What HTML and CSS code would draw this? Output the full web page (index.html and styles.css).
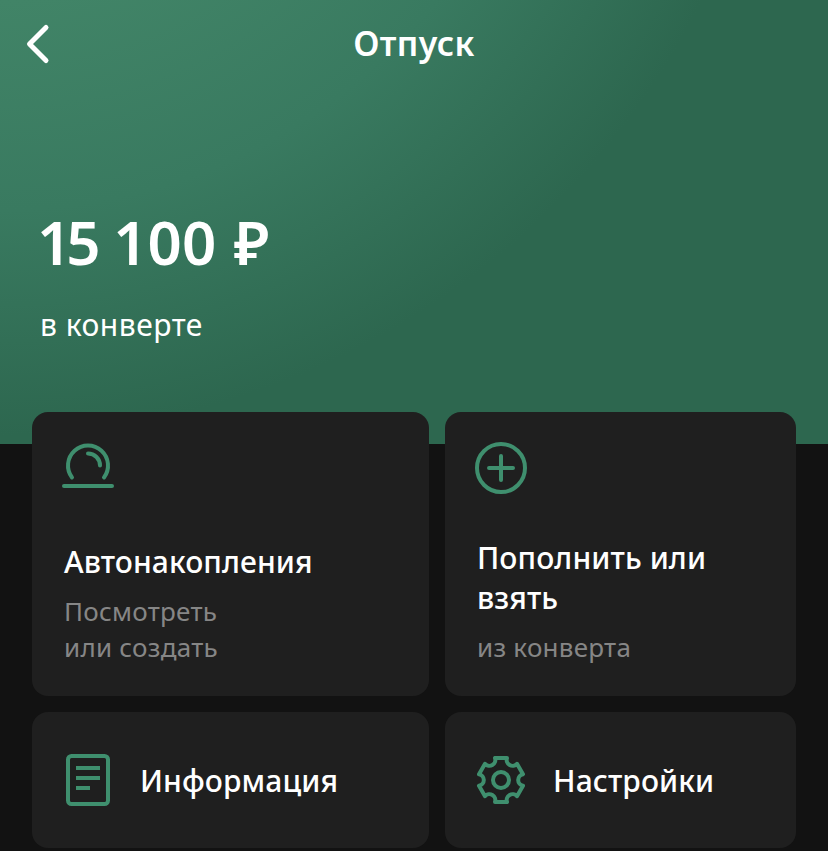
FILE: index.html
```html
<!DOCTYPE html>
<html lang="ru">
<head>
  <meta charset="UTF-8">
  <meta name="viewport" content="width=device-width, initial-scale=1.0">
  <title>Отпуск</title>
  <link rel="stylesheet" href="styles.css">
</head>
<body>
  <header class="hero">
    <div class="topbar">
      <a href="#" class="back" aria-label="Назад">
        <svg width="26" height="42" viewBox="0 0 26 42"><path d="M21 4.5 4.5 21 21 37.5"/></svg>
      </a>
      <h1>Отпуск</h1>
    </div>
    <p class="amount"><span class="tight">15</span> 100 ₽</p>
    <p class="amount-label">в конверте</p>
  </header>

  <main class="cards">
    <a href="#" class="card">
      <svg class="icon" width="56" height="56" viewBox="0 0 56 56">
        <path d="M12 37.5A20 20 0 1 1 44 37.5"/>
        <path d="M28 13.5A12 12 0 0 1 40 25.5"/>
        <path d="M4 46H52"/>
      </svg>
      <h2>Автонакопления</h2>
      <p>Посмотреть<br>или создать</p>
    </a>

    <a href="#" class="card">
      <svg class="icon" width="56" height="56" viewBox="0 0 56 56">
        <circle cx="28" cy="28" r="24"/>
        <path d="M28 16V40M16 28H40"/>
      </svg>
      <h2>Пополнить или взять</h2>
      <p>из конверта</p>
    </a>

    <a href="#" class="card card-row">
      <svg class="icon" width="56" height="56" viewBox="0 0 56 56">
        <rect x="8" y="4" width="40" height="48" rx="3.5"/>
        <path class="flat" d="M16 16H40M16 26H40M16 36H30"/>
      </svg>
      <h2>Информация</h2>
    </a>

    <a href="#" class="card card-row">
      <svg class="icon" width="56" height="56" viewBox="-28 -28 56 56">
        <path d="M-6-22H6A5.9 5.9 0 0 0 16-16.2L22-5.8A5.9 5.9 0 0 0 22 5.8L16 16.2A5.9 5.9 0 0 0 6 22H-6A5.9 5.9 0 0 0-16 16.2L-22 5.8A5.9 5.9 0 0 0-22-5.8L-16-16.2A5.9 5.9 0 0 0-6-22Z"/>
        <circle r="8"/>
      </svg>
      <h2>Настройки</h2>
    </a>
  </main>
</body>
</html>
```
FILE: styles.css
```css
* {
  box-sizing: border-box;
}

body {
  margin: 0;
  height: 851px;
  overflow: hidden;
  font-family: "Noto Sans", "Open Sans", sans-serif;
  background-color: #121212;
  color: #fff;
}

h1, h2, p {
  margin: 0;
}

.hero {
  height: 444px;
  background: radial-gradient(circle at 0 -350px, #418467 350px, #397a60 560px, #2d674f 785px);
}

.topbar {
  display: grid;
  grid-template-columns: 80px 1fr 80px;
  align-items: center;
  height: 88px;
}

.back {
  padding-left: 25px;
}

.back svg {
  display: block;
  fill: none;
  stroke: #fff;
  stroke-width: 5;
  stroke-linecap: round;
  stroke-linejoin: round;
}

.topbar h1 {
  padding-bottom: 2px;
  font-size: 34px;
  font-weight: 600;
  line-height: 44px;
  letter-spacing: 0.4px;
  text-align: center;
}

.amount {
  padding: 114px 37px 0;
  font-size: 60px;
  font-weight: 600;
  line-height: 80px;
  word-spacing: 2px;
}

.amount .tight {
  letter-spacing: -5px;
}

.amount-label {
  padding: 23px 40px 0;
  font-size: 30px;
  line-height: 40px;
  letter-spacing: 0.5px;
}

.cards {
  display: grid;
  grid-template-columns: 397px 351px;
  grid-template-rows: 284px 136px;
  gap: 16px;
  margin: -32px 32px 0;
}

.card {
  display: flex;
  flex-direction: column;
  padding: 28px 32px 31px;
  border-radius: 16px;
  background-color: #1f1f1f;
  color: #fff;
  text-decoration: none;
}

.icon {
  flex: none;
  margin-left: -4px;
  fill: none;
  stroke: #3f8f6e;
  stroke-width: 4;
  stroke-linecap: round;
  stroke-linejoin: round;
}

.icon .flat {
  stroke-linecap: butt;
}

.card h2 {
  margin-top: auto;
  font-size: 30px;
  font-weight: 480;
  line-height: 40px;
  letter-spacing: 0.1px;
}

.card p {
  margin-top: 11px;
  color: #868686;
  font-size: 26px;
  line-height: 36px;
  letter-spacing: 0.25px;
}

.card-row {
  flex-direction: row;
  align-items: center;
  gap: 24px;
  padding: 2px 32px 0;
}

.card-row .icon {
  margin-top: -2px;
}

.card-row h2 {
  margin: 0;
}
```
